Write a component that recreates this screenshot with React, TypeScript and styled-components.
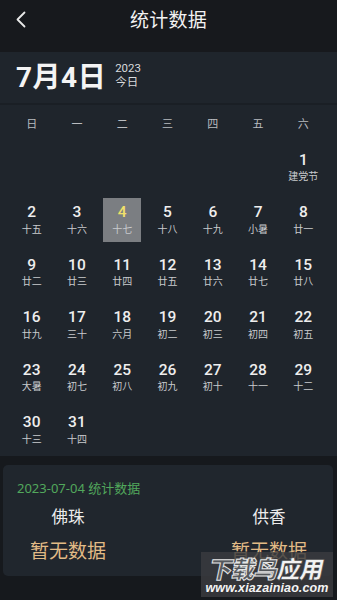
import React from 'react'
import styled, { createGlobalStyle } from 'styled-components'

const GlobalStyle = createGlobalStyle`
	html, body {
		margin: 0;
		padding: 0;
		background: #16191d;
	}
	body {
		font-family: 'Noto Sans', 'Noto Sans CJK SC', sans-serif;
		color: #eeeeee;
	}
	#root {
		min-height: 600px;
	}
`

const Page = styled.div`
	position: relative;
	width: 337px;
	height: 600px;
	overflow: hidden;
	background: #16191d;
`

const Header = styled.div`
	height: 52px;
	background: #17191d;
	position: relative;
`

const TitleRow = styled.div`
	height: 37px;
	display: flex;
	align-items: center;
	justify-content: center;
	position: relative;
`

const BackButton = styled.div`
	position: absolute;
	left: 15px;
	top: 10px;
	width: 14px;
	height: 18px;
	display: flex;
	align-items: center;
`

const Title = styled.div`
	font-family: 'Noto Sans CJK SC', sans-serif;
	font-size: 19px;
	color: #f2f2f2;
	letter-spacing: 0.2px;
`

const DateBar = styled.div`
	height: 51px;
	background: #1f252c;
	border-bottom: 2px solid #1a1f25;
	display: flex;
	align-items: center;
	padding-left: 16px;
	gap: 9px;
`

const BigDate = styled.div`
	font-family: 'Roboto', 'Noto Sans CJK SC', sans-serif;
	font-size: 28px;
	font-weight: 700;
	color: #f4f4f4;
	letter-spacing: 0.5px;
	line-height: 1;
`

const YearBox = styled.div`
	display: flex;
	flex-direction: column;
	font-family: 'Roboto', 'Noto Sans CJK SC', sans-serif;
	font-size: 11.5px;
	line-height: 13.5px;
	color: #d8dadc;
	margin-top: -4px;
`

const Calendar = styled.div`
	background: #1f252c;
	padding: 0 11px 0 9px;
	height: 351px;
`

const Grid = styled.div`
	display: grid;
	grid-template-columns: repeat(7, 1fr);
`

const WeekDay = styled.div`
	height: 36px;
	display: flex;
	align-items: center;
	justify-content: center;
	font-family: 'Noto Sans CJK SC', sans-serif;
	font-size: 11px;
	color: #b9bcc0;
`

const Cell = styled.div`
	height: 52.5px;
	display: flex;
	align-items: center;
	justify-content: center;
`

const DayBox = styled.div<{ selected?: boolean }>`
	width: 38px;
	height: 44px;
	display: flex;
	flex-direction: column;
	align-items: center;
	justify-content: center;
	background: ${(p) => (p.selected ? '#7b7e82' : 'transparent')};
`

const DayNum = styled.div<{ selected?: boolean }>`
	font-family: 'Roboto', sans-serif;
	font-size: 15.5px;
	line-height: 18.2px;
	font-weight: 500;
	color: ${(p) => (p.selected ? '#f0e06a' : '#eeeeee')};
`

const Lunar = styled.div`
	font-family: 'Noto Sans CJK SC', sans-serif;
	font-size: 10px;
	line-height: 14.5px;
	color: #c9cbce;
`

const Gap = styled.div`
	height: 9px;
`

const Card = styled.div`
	margin: 0 4px 0 3px;
	height: 111px;
	border-radius: 5px;
	background: #20262d;
	padding: 16px 0 0;
	box-sizing: border-box;
`

const CardTitle = styled.div`
	font-family: 'Noto Sans', 'Noto Sans CJK SC', sans-serif;
	font-size: 13px;
	line-height: 14px;
	color: #52a85c;
	padding-left: 14px;
`

const Stats = styled.div`
	display: flex;
	justify-content: space-between;
	padding: 0 26px 0 27px;
	margin-top: 11px;
`

const StatCol = styled.div`
	display: flex;
	flex-direction: column;
	align-items: center;
`

const StatLabel = styled.div`
	font-family: 'Noto Sans CJK SC', sans-serif;
	font-size: 16.5px;
	line-height: 20px;
	color: #ececec;
`

const StatValue = styled.div`
	font-family: 'Noto Sans CJK SC', sans-serif;
	font-size: 19px;
	line-height: 24px;
	color: #e2bb86;
	margin-top: 12px;
`

const Watermark = styled.div`
	position: absolute;
	left: 201px;
	top: 552px;
	width: 132px;
	height: 45px;
	background: rgba(58, 60, 64, 0.82);
	display: flex;
	flex-direction: column;
	align-items: center;
	overflow: hidden;
`

const WmBig = styled.div`
	font-family: 'Noto Sans CJK SC', sans-serif;
	font-size: 23.5px;
	font-weight: 900;
	line-height: 26px;
	letter-spacing: -0.8px;
	margin-top: 3px;
	transform: skewX(-12deg);
	white-space: nowrap;
`

const WmOutline = styled.span`
	color: #55585c;
	-webkit-text-stroke: 1px #e6e6e6;
`

const WmSolid = styled.span`
	color: #f2f2f2;
	-webkit-text-stroke: 0.5px #333;
`

const WmUrl = styled.div`
	font-family: 'Liberation Sans', sans-serif;
	font-size: 12.5px;
	font-weight: 700;
	font-style: italic;
	line-height: 14px;
	color: #f4f4f4;
	letter-spacing: 0.1px;
`

const weekDays = ['日', '一', '二', '三', '四', '五', '六']

const lunar = [
	'建党节',
	'十五', '十六', '十七', '十八', '十九', '小暑', '廿一',
	'廿二', '廿三', '廿四', '廿五', '廿六', '廿七', '廿八',
	'廿九', '三十', '六月', '初二', '初三', '初四', '初五',
	'大暑', '初七', '初八', '初九', '初十', '十一', '十二',
	'十三', '十四'
]

const firstWeekday = 6
const today = 4

const App: React.FC = () => {
	const blanks = Array.from({ length: firstWeekday })
	return (
		<>
			<GlobalStyle />
			<Page>
				<Header>
					<TitleRow>
						<BackButton>
							<svg width="12" height="17" viewBox="0 0 12 17">
								<polyline points="9.5,1.5 2.5,8.5 9.5,15.5" fill="none" stroke="#e8e8e8" strokeWidth="1.8" strokeLinecap="round" strokeLinejoin="round" />
							</svg>
						</BackButton>
						<Title>统计数据</Title>
					</TitleRow>
				</Header>
				<DateBar>
					<BigDate>7月4日</BigDate>
					<YearBox>
						<span>2023</span>
						<span>今日</span>
					</YearBox>
				</DateBar>
				<Calendar>
					<Grid>
						{weekDays.map((d) => (
							<WeekDay key={d}>{d}</WeekDay>
						))}
						{blanks.map((_, i) => (
							<Cell key={'b' + i} />
						))}
						{lunar.map((l, i) => {
							const day = i + 1
							const sel = day === today
							return (
								<Cell key={day}>
									<DayBox selected={sel}>
										<DayNum selected={sel}>{day}</DayNum>
										<Lunar>{l}</Lunar>
									</DayBox>
								</Cell>
							)
						})}
					</Grid>
				</Calendar>
				<Gap />
				<Card>
					<CardTitle>2023-07-04 统计数据</CardTitle>
					<Stats>
						<StatCol>
							<StatLabel>佛珠</StatLabel>
							<StatValue>暂无数据</StatValue>
						</StatCol>
						<StatCol>
							<StatLabel>供香</StatLabel>
							<StatValue>暂无数据</StatValue>
						</StatCol>
					</Stats>
				</Card>
				<Watermark>
					<WmBig>
						<WmOutline>下载鸟</WmOutline>
						<WmSolid>应用</WmSolid>
					</WmBig>
					<WmUrl>www.xiazainiao.com</WmUrl>
				</Watermark>
			</Page>
		</>
	)
}

export default App
